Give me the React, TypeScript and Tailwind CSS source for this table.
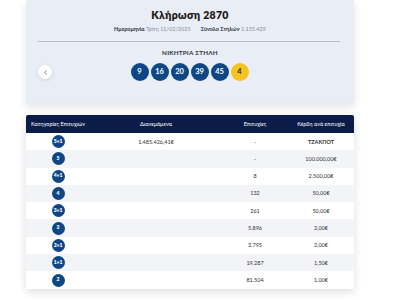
import { ChevronLeft } from 'lucide-react'

const balls = [
    { n: '9', bonus: false },
    { n: '16', bonus: false },
    { n: '20', bonus: false },
    { n: '39', bonus: false },
    { n: '45', bonus: false },
    { n: '4', bonus: true },
]

const rows = [
    { cat: '5+1', pool: '1.485.426,41€', wins: '-', prize: 'ΤΖΑΚΠΟΤ' },
    { cat: '5', pool: '', wins: '-', prize: '100.000,00€' },
    { cat: '4+1', pool: '', wins: '8', prize: '2.500,00€' },
    { cat: '4', pool: '', wins: '132', prize: '50,00€' },
    { cat: '3+1', pool: '', wins: '261', prize: '50,00€' },
    { cat: '3', pool: '', wins: '5.896', prize: '2,00€' },
    { cat: '2+1', pool: '', wins: '3.795', prize: '2,00€' },
    { cat: '1+1', pool: '', wins: '19.287', prize: '1,50€' },
    { cat: '2', pool: '', wins: '81.504', prize: '1,00€' },
]

export default function App() {
    return (
        <div className="w-[400px] h-[300px] bg-white overflow-hidden font-['Lato','Noto_Sans',sans-serif]">
            <div className="ml-[26px] w-[328px]">
                <div className="relative h-[103px] bg-[#e9edf6] shadow-[0_4px_8px_rgba(20,30,60,0.12)] flex flex-col items-center pt-[8px]">
                    <div className="text-[10.5px] leading-[14px] font-extrabold text-[#1a1a1a] tracking-[0.3px]">Κλήρωση 2870</div>
                    <div className="mt-[3px] text-[5.5px] leading-[8px] text-[#8a8f99] flex gap-[10px]">
                        <span><b className="text-[#2a2f3a] font-bold">Ημερομηνία</b> Τρίτη 11/02/2025</span>
                        <span><b className="text-[#2a2f3a] font-bold">Σύνολο Στηλών</b> 1.155.429</span>
                    </div>
                    <div className="mt-[8px] ml-[-2px] w-[302px] h-px bg-[#b7bcc7]" />
                    <div className="mt-[6px] text-[6.3px] leading-[9px] font-bold text-[#2a2f3a] tracking-[0.2px]">ΝΙΚΗΤΡΙΑ ΣΤΗΛΗ</div>
                    <div className="mt-[6px] flex gap-[2px] ml-[-1px]">
                        {balls.map((b, i) => (
                            <div
                                key={i}
                                className={`w-[18px] h-[18px] rounded-full flex items-center justify-center text-[7.5px] font-bold ${b.bonus ? 'bg-[#f6c31f] text-[#2a2a2a]' : 'bg-[#0f4785] text-white'}`}
                            >
                                {b.n}
                            </div>
                        ))}
                    </div>
                    <button
                        aria-label="Previous"
                        className="absolute left-[12px] top-[65px] w-[14px] h-[14px] rounded-full bg-white shadow-[0_1px_4px_rgba(0,0,0,0.12)] flex items-center justify-center text-[#555]"
                    >
                        <ChevronLeft size={7} strokeWidth={2.5} />
                    </button>
                </div>

                <div className="mt-[12px] shadow-[0_3px_8px_rgba(20,30,60,0.14)]">
                    <div className="grid grid-cols-[64px_132px_66px_66px] h-[18px] items-center bg-[#0b1c48] text-white text-[5.5px] rounded-t-[2px] text-center">
                        <div>Κατηγορίες Επιτυχιών</div>
                        <div>Διανεμόμενα</div>
                        <div>Επιτυχίες</div>
                        <div>Κέρδη ανά επιτυχία</div>
                    </div>
                    {rows.map((r, i) => (
                        <div
                            key={r.cat}
                            className={`grid grid-cols-[64px_132px_66px_66px] h-[17.3px] items-center text-center text-[5.5px] text-[#333] ${i % 2 === 0 ? 'bg-white' : 'bg-[#f3f4f7]'}`}
                        >
                            <div className="flex justify-center">
                                <div className="w-[13px] h-[13px] rounded-full bg-[#0f4785] text-white text-[5px] font-extrabold flex items-center justify-center">
                                    {r.cat}
                                </div>
                            </div>
                            <div>{r.pool}</div>
                            <div>{r.wins}</div>
                            <div className={r.prize === 'ΤΖΑΚΠΟΤ' ? 'font-bold' : ''}>{r.prize}</div>
                        </div>
                    ))}
                </div>
            </div>
        </div>
    )
}
